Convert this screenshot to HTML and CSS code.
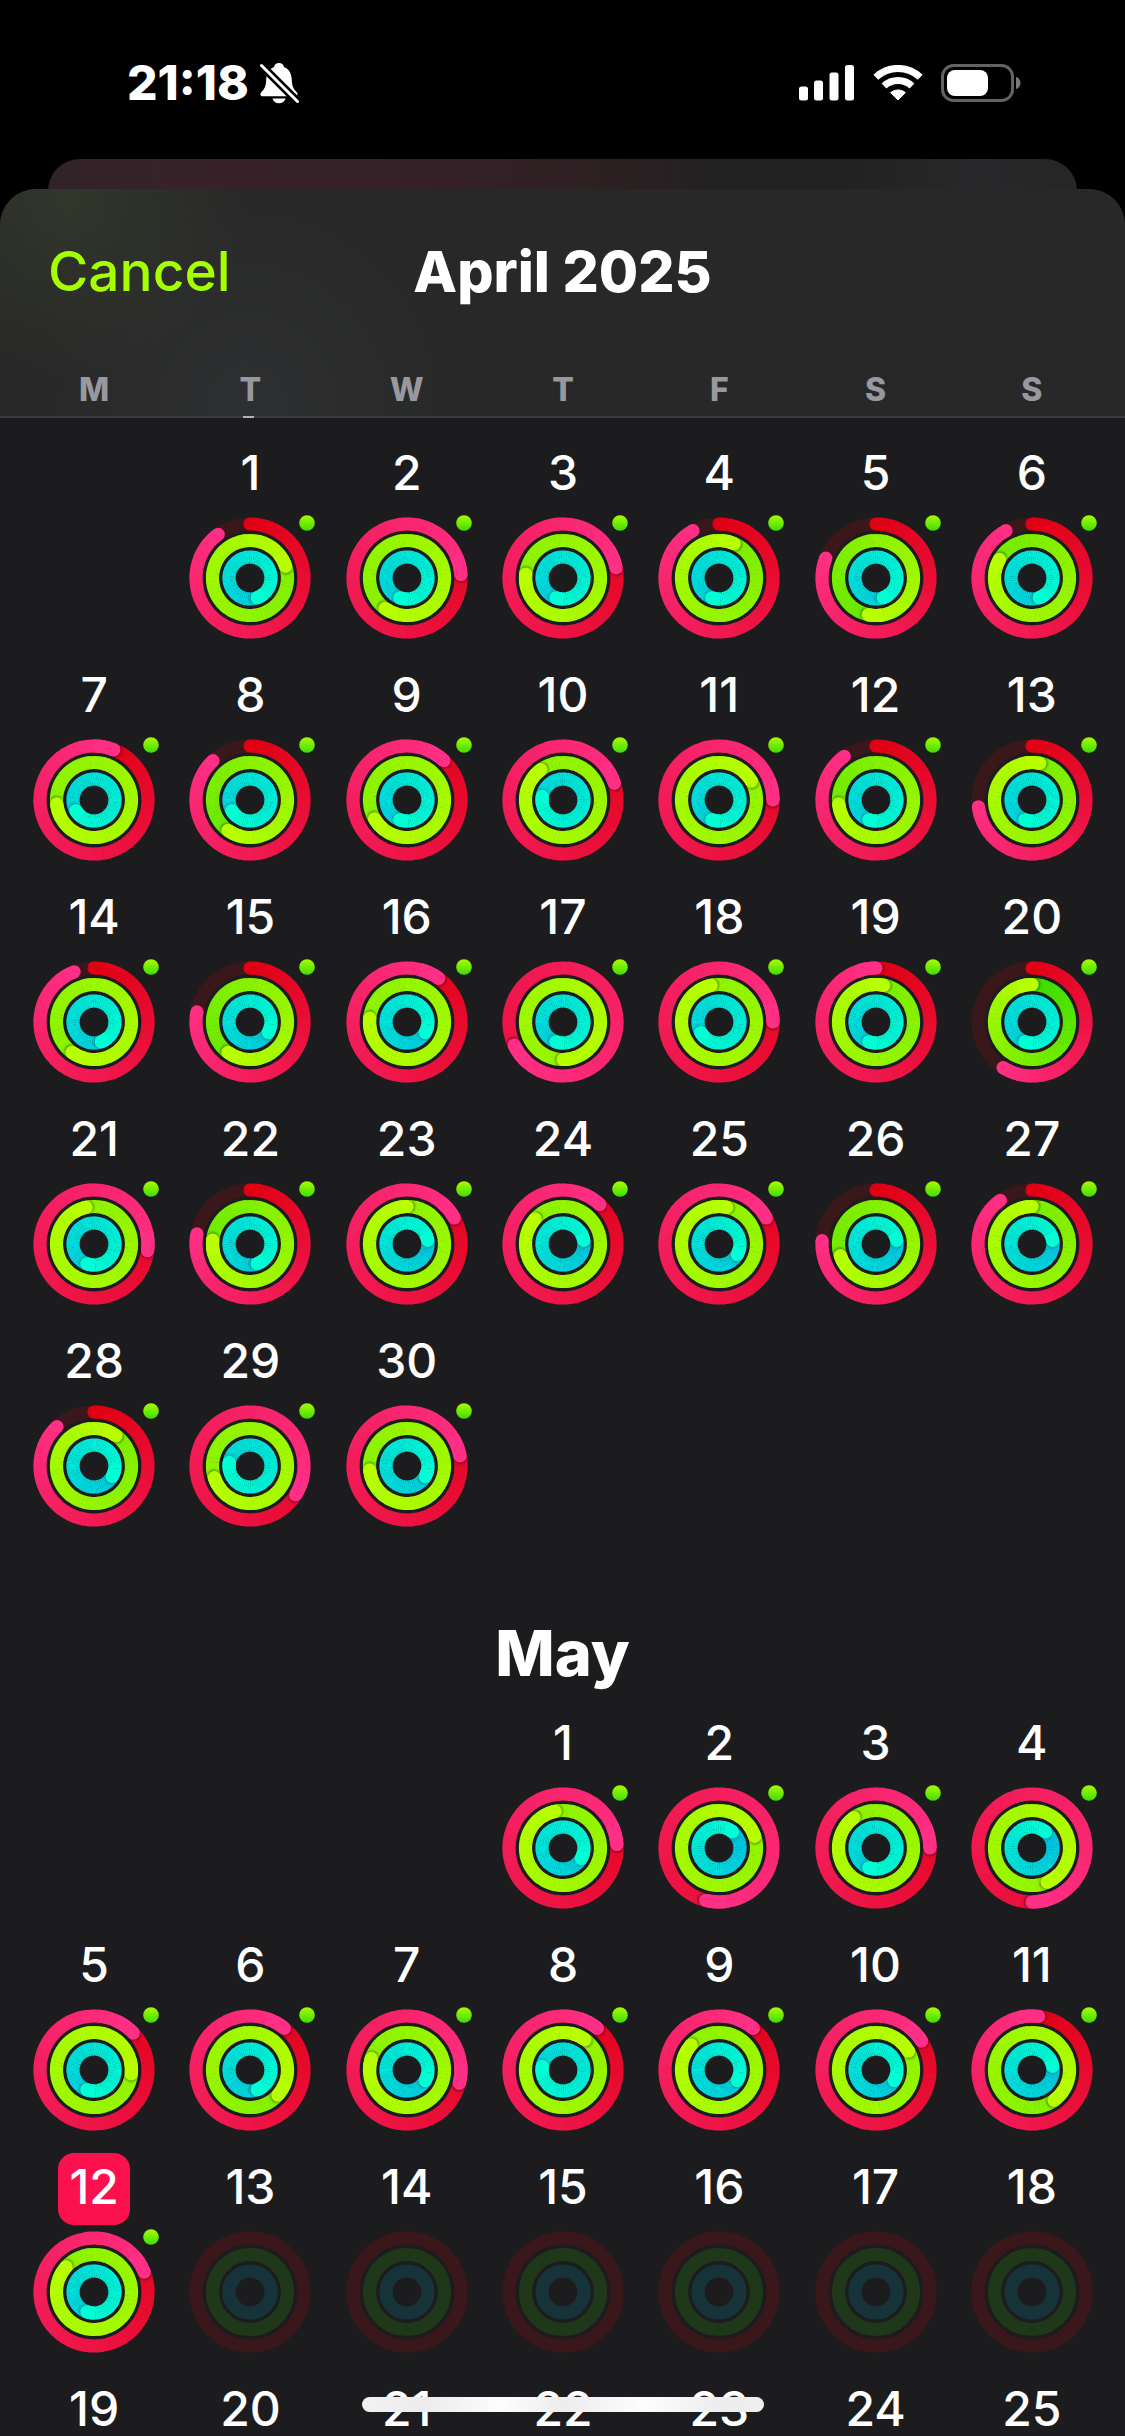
FILE: index.html
```html
<!DOCTYPE html>
<html lang="en">
<head>
    <meta charset="UTF-8">
    <meta name="viewport" content="width=device-width, initial-scale=1.0">
    <title>Activity History</title>
    <link rel="stylesheet" href="styles.css">
</head>
<body>
    <div class="status-bar">
        <div class="status-left">
            <span class="clock">21:18</span>
            <svg class="bell-icon" viewBox="0 0 40 42" width="40" height="42" aria-label="Silent mode">
                <path fill="#fff" d="M20 1c-2.600 0-4.600 1.600-5 4C9.500 7 7.500 12 7.200 18 7 24 5.500 27 2.500 30c-2 2.200-1 4.300 1.500 4.300h32c2.500 0 3.500-2.100 1.500-4.300-3-3-4.500-6-4.700-12C32.500 12 30.500 7 25 5c-.4-2.400-2.400-4-5-4z"/>
                <path fill="#fff" d="M13.500 36.500h13c-.7 3-3.300 4.700-6.500 4.700s-5.800-1.700-6.500-4.700z"/>
                <path stroke="#000" stroke-width="8" d="M1 2l38 38"/>
                <path stroke="#fff" stroke-width="3" stroke-linecap="round" d="M2.500 3.500l36 36"/>
            </svg>
        </div>
        <div class="status-right">
            <svg viewBox="0 0 56 36" width="56" height="36" fill="#fff" aria-label="Signal">
                <rect x="0" y="21.500" width="9" height="14" rx="2.500"/>
                <rect x="15" y="15.500" width="9" height="20" rx="2.500"/>
                <rect x="30.500" y="7.500" width="9" height="28" rx="2.500"/>
                <rect x="46" y="0" width="9" height="35.500" rx="2.500"/>
            </svg>
            <svg viewBox="0 0 50 36" width="50" height="36" aria-label="Wi-Fi">
                <g fill="none" stroke="#fff" stroke-width="7">
                    <path d="M2.800 12.200a32.500 32.500 0 0 1 44.400 0"/>
                    <path d="M11 21a20.500 20.500 0 0 1 28 0"/>
                </g>
                <path fill="#fff" stroke="#fff" stroke-linejoin="round" d="M17.600 27.600a11.500 11.500 0 0 1 14.800 0L25 35z"/>
            </svg>
            <svg viewBox="0 0 80 38" width="80" height="38" aria-label="Battery">
                <rect x="1.500" y="1.500" width="70" height="35" rx="11" fill="none" stroke="#636363" stroke-width="3"/>
                <rect x="6" y="6" width="41" height="26" rx="8" fill="#fff"/>
                <path fill="#7a7a7a" d="M75 13c3 .8 4.500 3 4.500 6s-1.500 5.200-4.500 6z"/>
            </svg>
        </div>
    </div>

    <div class="back-sheet"></div>

    <main class="sheet">
        <header class="nav">
            <div class="toolbar">
                <button type="button" class="cancel">Cancel</button>
                <h1>April 2025</h1>
            </div>
            <div class="weekdays">
                <span>M</span>
                <span>T</span>
                <span>W</span>
                <span>T</span>
                <span>F</span>
                <span>S</span>
                <span>S</span>
            </div>
        </header>

        <section class="month" id="april" aria-label="April"></section>

        <h2>May</h2>
        <section class="month" id="may" aria-label="May"></section>
    </main>

    <div class="home-indicator"></div>

    <!-- shared gradient, shadow blur and ring clips -->
    <svg class="defs" width="0" height="0" aria-hidden="true">
        <defs>
            <linearGradient id="dotFill" x1="0" y1="0" x2="0" y2="1">
                <stop offset="0" stop-color="#a8fb00"/>
                <stop offset="1" stop-color="#3fdd00"/>
            </linearGradient>
            <filter id="capShadow" x="-50%" y="-50%" width="200%" height="200%">
                <feGaussianBlur stdDeviation="1.200"/>
            </filter>
            <clipPath id="clipMove"><path clip-rule="evenodd" d="M61 .4a60.600 60.600 0 1 0 .01 0zM61 13.600a47.400 47.400 0 1 0 .01 0z"/></clipPath>
            <clipPath id="clipExercise"><path clip-rule="evenodd" d="M61 16.900a44.100 44.100 0 1 0 .01 0zM61 30.100a30.900 30.900 0 1 0 .01 0z"/></clipPath>
            <clipPath id="clipStand"><path clip-rule="evenodd" d="M61 33.400a27.600 27.600 0 1 0 .01 0zM61 46.600a14.400 14.400 0 1 0 .01 0z"/></clipPath>
        </defs>
    </svg>

    <script src="script.js"></script>
</body>
</html>
```

FILE: styles.css
```css
* {
    margin: 0;
    padding: 0;
    box-sizing: border-box;
}

body {
    display: flex;
    flex-direction: column;
    height: 100vh;
    overflow: hidden;
    position: relative;
    background: #000;
    color: #fff;
    font-family: Inter, 'Liberation Sans', sans-serif;
}

.status-bar {
    display: flex;
    justify-content: space-between;
    flex-shrink: 0;
    padding: 59px 104px 52px 127px;
}

.status-left,
.status-right {
    display: flex;
    align-items: center;
    height: 48px;
}

.status-left {
    gap: 10px;
}

.status-right {
    gap: 18px;
}

.clock {
    font-size: 48px;
    font-weight: 800;
    line-height: 48px;
}

.back-sheet {
    flex-shrink: 0;
    height: 60px;
    margin: 0 48px -30px;
    border-radius: 32px 32px 0 0;
    background: linear-gradient(90deg, #302327 0%, #37222a 12%, #342127 38%, #2d2023 54%, #212121 66%, #212122 76%, #28282a 90%, #262627 100%);
}

.sheet {
    flex: 1;
    min-height: 0;
    position: relative;
    overflow: hidden;
    border-radius: 36px 36px 0 0;
    background: #1c1c1e;
}

.nav {
    position: relative;
    padding: 42px 0 4px;
    border-bottom: 2px solid #3c3c3e;
    background:
        radial-gradient(circle at 6% 4%, rgba(56, 64, 44, 0.6), transparent 180px),
        radial-gradient(circle at 22% 94%, rgba(50, 52, 54, 0.6), transparent 220px),
        #282828;
}

.nav::after {
    content: "";
    position: absolute;
    left: 243px;
    bottom: -2px;
    width: 11px;
    height: 2px;
    background: #b4b4b6;
}

.toolbar {
    display: grid;
    grid-template-columns: 1fr auto 1fr;
    align-items: center;
    height: 80px;
    padding: 0 48px;
}

.cancel {
    justify-self: start;
    border: none;
    background: none;
    color: #a6ff00;
    font-family: inherit;
    font-size: 55px;
    font-weight: 500;
    cursor: pointer;
}

h1 {
    font-size: 57px;
    font-weight: 800;
}

.weekdays {
    display: grid;
    grid-template-columns: repeat(7, 1fr);
    margin-top: 57px;
    padding: 0 15px 0 16px;
    color: #98989f;
    font-size: 32px;
    font-weight: 800;
    line-height: 44px;
    text-align: center;
}

.month {
    display: grid;
    grid-template-columns: repeat(7, 1fr);
    row-gap: 22px;
    padding: 0 15px 0 16px;
}

#april {
    padding-top: 21px;
}

h2 {
    margin: 86px 0 16px;
    font-size: 63px;
    font-weight: 800;
    line-height: 80px;
    text-align: center;
}

.day {
    display: flex;
    flex-direction: column;
    align-items: center;
    gap: 6px;
    border: none;
    background: none;
    color: inherit;
    font-family: inherit;
    cursor: pointer;
}

.number {
    min-width: 72px;
    height: 72px;
    border-radius: 16px;
    font-size: 48px;
    font-weight: 500;
    line-height: 68px;
}

.today .number {
    background: #fc114f;
}

.rings {
    display: block;
    width: 122px;
    height: 122px;
    overflow: visible;
}

.defs {
    position: absolute;
}

.home-indicator {
    position: absolute;
    left: 50%;
    bottom: 24px;
    width: 402px;
    height: 15px;
    border-radius: 8px;
    transform: translateX(-50%);
    background: linear-gradient(90deg, #f2f2f2, #ececec 15%, #fdfdfd 35%, #ededed 50%, #fdfdfd 70%, #ececec 90%, #efefef);
}
```

FILE: script.js
```javascript
const GOALS = [100, 30, 9];

const RINGS = [
    { radius: 54, clip: 'clipMove', shadow: 0.4, track: '#3a171b', from: [224, 0, 20], to: [255, 47, 134] },
    { radius: 37.5, clip: 'clipExercise', shadow: 0.35, track: '#20381a', from: [60, 221, 0], to: [184, 255, 0] },
    { radius: 21, clip: 'clipStand', shadow: 0.2, track: '#17333a', from: [0, 186, 225], to: [0, 255, 212] }
];

// move %, exercise minutes, stand hours
const april = [
    [90, 66, 13], [124, 78, 14], [122, 83, 14], [92, 62, 14], [81, 46, 13], [92, 55, 13],
    [106, 82, 15], [88, 48, 15], [112, 80, 14], [120, 87, 16], [125, 95, 14], [90, 52, 14], [73, 61, 14],
    [94, 78, 13], [78, 48, 12], [110, 83, 12], [168, 105, 14], [125, 89, 15], [100, 61, 14], [59, 30, 14],
    [127, 89, 14], [78, 53, 13], [117, 90, 11], [112, 86, 11], [117, 91, 12], [76, 51, 11], [90, 60, 11],
    [88, 63, 12], [134, 81, 16], [122, 82, 12]
];

const may = [
    [124, 89, 12], [154, 96, 10], [125, 87, 14], [150, 103, 10],
    [113, 98, 14], [111, 71, 13], [129, 84, 12], [111, 93, 16], [111, 86, 12], [116, 95, 12], [102, 72, 11],
    [119, 86, 14]
];

const C = 61;
const WIDTH = 13.2;

function point(radius, turn) {
    const a = turn * 2 * Math.PI;
    return [(C + radius * Math.sin(a)).toFixed(2), (C - radius * Math.cos(a)).toFixed(2)];
}

function color(ring, t) {
    return 'rgb(' + ring.from.map((c, i) => Math.round(c + (ring.to[i] - c) * t)).join(',') + ')';
}

function arc(r, start, end, stroke) {
    return `<path d="M${point(r, start)}A${r} ${r} 0 0 1 ${point(r, end)}" fill="none" stroke="${stroke}" stroke-width="${WIDTH}"/>`;
}

function cap(r, turn, fill) {
    const [x, y] = point(r, turn);
    return `<circle cx="${x}" cy="${y}" r="${WIDTH / 2}" fill="${fill}"/>`;
}

function drawRing(ring, value) {
    const r = ring.radius;
    if (!value) {
        return `<circle cx="${C}" cy="${C}" r="${r}" fill="none" stroke="${ring.track}" stroke-width="${WIDTH}"/>`;
    }

    // only the last lap is visible
    const start = Math.max(0, value - 1);
    const steps = 60;
    const step = (value - start) / steps;
    let out = '';
    if (value < 1) {
        out += arc(r, value, 1, ring.track) + cap(r, 0, color(ring, 0));
    }
    for (let i = 0; i < steps; i++) {
        const a = start + i * step;
        out += arc(r, a, a + step + (i < steps - 1 ? 0.002 : 0), color(ring, a / value));
    }
    if (value >= 1) {
        const [x, y] = point(r, value + 1.5 / (2 * Math.PI * r));
        out += `<g clip-path="url(#${ring.clip})"><circle cx="${x}" cy="${y}" r="6.600" opacity="${ring.shadow}" filter="url(#capShadow)"/></g>`;
        out += arc(r, value - 0.06, value, color(ring, 0.99));
    }
    return out + cap(r, value, color(ring, 1));
}

function drawDay(number, data, column) {
    const day = document.createElement('button');
    day.type = 'button';
    day.className = 'day';
    if (column) day.style.gridColumnStart = column;

    let rings = RINGS.map((ring, i) => drawRing(ring, data ? data[i] / GOALS[i] : 0)).join('');
    if (data) rings += '<circle cx="118" cy="6" r="7.800" fill="url(#dotFill)"/>';
    day.innerHTML = `<span class="number">${number}</span>
        <svg class="rings" viewBox="0 0 122 122" aria-hidden="true">${rings}</svg>`;
    return day;
}

function drawMonth(id, length, firstColumn, days, today) {
    const month = document.getElementById(id);
    for (let n = 1; n <= length; n++) {
        const day = drawDay(n, days[n - 1], n === 1 ? firstColumn : 0);
        if (n === today) day.classList.add('today');
        month.appendChild(day);
    }
}

drawMonth('april', 30, 2, april);
drawMonth('may', 31, 4, may, 12);
```
